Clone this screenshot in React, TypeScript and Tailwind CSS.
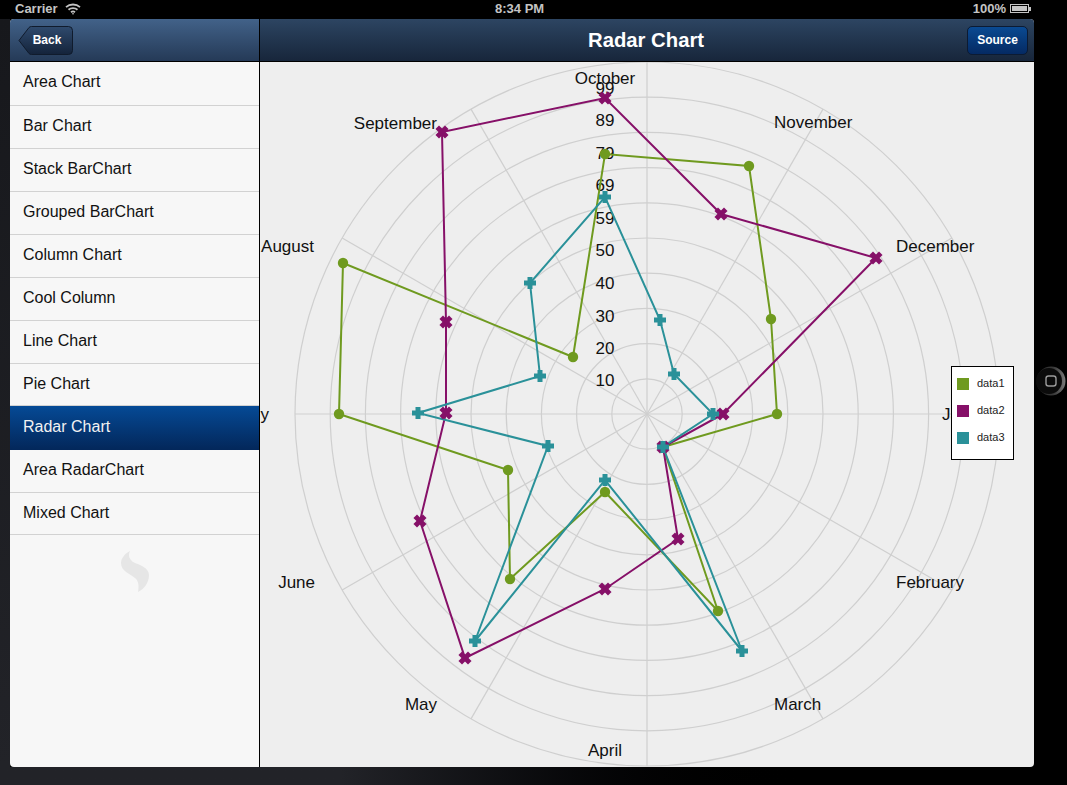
import { useMemo } from "react"

const menu = [
  "Area Chart",
  "Bar Chart",
  "Stack BarChart",
  "Grouped BarChart",
  "Column Chart",
  "Cool Column",
  "Line Chart",
  "Pie Chart",
  "Radar Chart",
  "Area RadarChart",
  "Mixed Chart",
]

// chart box starts at x 260, y 62 in the page
const cx = 387
const cy = 352
const ringGap = 35.2

const monthLabels: [string, number, number, "start" | "middle" | "end"][] = [
  ["January", 682, 358, "start"],
  ["February", 636, 526, "start"],
  ["March", 514, 648, "start"],
  ["April", 345, 694, "middle"],
  ["May", 177, 648, "end"],
  ["June", 55, 526, "end"],
  ["July", 9, 358, "end"],
  ["August", 54, 190, "end"],
  ["September", 177, 67, "end"],
  ["October", 345, 22, "middle"],
  ["November", 514, 66, "start"],
  ["December", 636, 190, "start"],
]

const ticks: [string, number][] = [
  ["10", 324],
  ["20", 292],
  ["30", 260],
  ["40", 227],
  ["50", 194],
  ["59", 162],
  ["69", 129],
  ["79", 97],
  ["89", 64],
  ["99", 32],
]

const data1 = [[517, 352], [403, 385], [458, 549], [345, 430], [250, 517], [248, 408], [79, 352], [83, 201], [313, 295], [345, 92], [489, 104], [511, 257]]
const data2 = [[463, 352], [403, 385], [418, 477], [345, 527], [205, 596], [160, 459], [186, 351], [186, 260], [182, 70], [345, 36], [461, 152], [616, 196]]
const data3 = [[453, 352], [403, 385], [482, 589], [345, 418], [215, 579], [288, 384], [158, 351], [280, 314], [270, 221], [345, 135], [400, 258], [414, 312]]

function toPoints(list: number[][]) {
  return list.map((p) => p.join(",")).join(" ")
}

function CrossMark({ x, y, color }: { x: number; y: number; color: string }) {
  return (
    <g stroke={color} strokeWidth="5" strokeLinecap="square">
      <line x1={x - 3} y1={y - 3} x2={x + 3} y2={y + 3} />
      <line x1={x + 3} y1={y - 3} x2={x - 3} y2={y + 3} />
    </g>
  )
}

function PlusMark({ x, y, color }: { x: number; y: number; color: string }) {
  return (
    <g stroke={color} strokeWidth="5">
      <line x1={x - 6} y1={y} x2={x + 6} y2={y} />
      <line x1={x} y1={y - 6} x2={x} y2={y + 6} />
    </g>
  )
}

function RadarChart() {
  const spokes = useMemo(
    () =>
      Array.from({ length: 12 }, (_, i) => {
        const a = (i * Math.PI) / 6
        return { x: cx + Math.cos(a) * ringGap * 10, y: cy + Math.sin(a) * ringGap * 10 }
      }),
    []
  )

  return (
    <svg width="774" height="705" viewBox="0 0 774 705" className="block">
      <g fill="none" stroke="#cfcfcf" strokeWidth="1.2">
        {Array.from({ length: 10 }, (_, i) => (
          <circle key={i} cx={cx} cy={cy} r={ringGap * (i + 1)} />
        ))}
        {spokes.map((s, i) => (
          <line key={i} x1={cx} y1={cy} x2={s.x} y2={s.y} />
        ))}
      </g>
      <g fontFamily="'Liberation Sans', Arial, sans-serif" fontSize="17" fill="#111">
        {monthLabels.map(([label, x, y, anchor]) => (
          <text key={label} x={x} y={y} textAnchor={anchor}>
            {label}
          </text>
        ))}
        {ticks.map(([label, y]) => (
          <text key={label} x={345} y={y} textAnchor="middle">
            {label}
          </text>
        ))}
      </g>
      <g fill="none" strokeWidth="2">
        <polygon points={toPoints(data1)} stroke="#6f9a1f" />
        <polygon points={toPoints(data2)} stroke="#861068" />
        <polygon points={toPoints(data3)} stroke="#2a9199" />
      </g>
      {data1.map(([x, y], i) => (
        <circle key={i} cx={x} cy={y} r="5.2" fill="#6f9a1f" />
      ))}
      {data2.map(([x, y], i) => (
        <CrossMark key={i} x={x} y={y} color="#861068" />
      ))}
      {data3.map(([x, y], i) => (
        <PlusMark key={i} x={x} y={y} color="#2a9199" />
      ))}
    </svg>
  )
}

function LegendRow({ color, label }: { color: string; label: string }) {
  return (
    <div className="flex items-center gap-2 h-[27px]">
      <span className={`w-3 h-3 ${color}`} />
      <span className="text-[11px] text-[#222]">{label}</span>
    </div>
  )
}

function HomeButton() {
  return (
    <svg width="30" height="30" viewBox="0 0 30 30">
      <defs>
        <linearGradient id="homeRing" x1="0" y1="0" x2="1" y2="0">
          <stop offset="0" stopColor="#262626" />
          <stop offset="0.6" stopColor="#3a3a3a" />
          <stop offset="1" stopColor="#7a7a7a" />
        </linearGradient>
      </defs>
      <circle cx="15" cy="15" r="14.5" fill="url(#homeRing)" />
      <circle cx="13" cy="15" r="13" fill="#0b0b0b" />
      <rect x="10" y="10" width="10" height="10" rx="2.5" fill="none" stroke="#9a9a9a" strokeWidth="1.4" />
    </svg>
  )
}

// row heights differ by a pixel here and there in the reference
const rowSizes: Record<string, string> = {
  "Area Chart": "h-[44px] pb-[4px]",
  "Pie Chart": "h-[42px] pb-[1px]",
  "Mixed Chart": "h-[42px] pb-[2px]",
}

export default function App() {
  return (
    <div className="w-[1067px] h-[785px] overflow-hidden flex flex-col bg-black font-['Liberation_Sans',Arial,sans-serif]">
      {/* status bar */}
      <div className="h-[19px] shrink-0 bg-black text-[#c4c4c4] text-[13px] font-bold flex items-center justify-between pl-[15px] pr-[36px] pb-[2px] relative">
        <div className="flex items-center gap-[7px]">
          <span>Carrier</span>
          <svg width="16" height="12" viewBox="0 0 16 12" fill="none" stroke="#c4c4c4" strokeWidth="1.8">
            <path d="M1 4.2C5 .6 11 .6 15 4.2" />
            <path d="M3.5 6.8C6 4.6 10 4.6 12.5 6.8" />
            <path d="M6 9.2C7.2 8.2 8.8 8.2 10 9.2" />
            <path d="M8 9.8l1 1-1 1-1-1z" fill="#c4c4c4" stroke="none" />
          </svg>
        </div>
        <span className="absolute left-[495px] top-0 leading-[17px]">8:34 PM</span>
        <div className="flex items-center gap-[4px]">
          <span>100%</span>
          <span className="flex items-center">
            <span className="w-[19px] h-[9px] border border-[#c4c4c4] p-px flex">
              <span className="flex-1 bg-[#c4c4c4]" />
            </span>
            <span className="w-[2px] h-[4px] bg-[#c4c4c4]" />
          </span>
        </div>
      </div>

      <div className="flex flex-1 min-h-0">
        <div className="w-[10px] shrink-0 bg-gradient-to-b from-[#17181c] to-[#222328]" />

        {/* app panel */}
        <div className="w-[1024px] shrink-0 h-[748px] bg-black">
          <div className="w-full h-full rounded-[4px] overflow-hidden flex">
            {/* sidebar */}
            <div className="w-[250px] shrink-0 flex flex-col bg-[#f7f7f7] border-r border-black">
              <div className="h-[43px] shrink-0 border-b border-black bg-gradient-to-b from-[#426289] to-[#253a57] flex items-center pl-[8px]">
                <div className="relative h-[29px] w-[55px] flex items-center justify-center pl-[3px] text-white text-[12px] font-bold">
                  <svg width="55" height="29" viewBox="0 0 55 29" className="absolute left-0 top-0">
                    <defs>
                      <linearGradient id="backFill" x1="0" y1="0" x2="0" y2="1">
                        <stop offset="0" stopColor="#2f4a6d" />
                        <stop offset="1" stopColor="#14233a" />
                      </linearGradient>
                    </defs>
                    <path
                      d="M1 14.5L11 1.5Q12 .5 13.5 .5H50.5Q54.5 .5 54.5 4.5V24.5Q54.5 28.5 50.5 28.5H13.5Q12 28.5 11 27.5Z"
                      fill="url(#backFill)"
                      stroke="#101b2c"
                    />
                  </svg>
                  <span className="relative">Back</span>
                </div>
              </div>
              {menu.map((item) => {
                if (item === "Radar Chart") {
                  return (
                    <div
                      key={item}
                      className="h-[44px] shrink-0 pl-[13px] pb-[3px] flex items-center text-[16px] text-[#f2f2f2] bg-gradient-to-b from-[#054a96] to-[#03275a]"
                    >
                      {item}
                    </div>
                  )
                }
                return (
                  <div
                    key={item}
                    className={`shrink-0 pl-[13px] flex items-center text-[16px] text-[#111] border-b border-[#d2d2d2] ${
                      rowSizes[item] ?? "h-[43px] pb-[2px]"
                    }`}
                  >
                    {item}
                  </div>
                )
              })}
              <div className="flex justify-center pt-[16px]">
                <svg width="30" height="42" viewBox="0 0 30 42">
                  <path
                    d="M10 0C4 3 1 8 1 12C1 20 10 23 15 27C19 30 19 36 18 41C24 38 29 32 29 24C29 17 20 14 13 11C9 8 8 4 10 0Z"
                    fill="#e6e6e6"
                  />
                </svg>
              </div>
            </div>

            {/* content */}
            <div className="flex-1 min-w-0 flex flex-col bg-[#eeeeee]">
              <div className="h-[43px] shrink-0 border-b border-black bg-gradient-to-b from-[#2d4562] to-[#17263b] flex items-center justify-between pl-[328px] pr-[6px]">
                <span className="text-white text-[20.3px] font-bold">Radar Chart</span>
                <div className="h-[29px] w-[61px] rounded-[5px] border border-[#0c1b33] bg-gradient-to-b from-[#0a4a92] to-[#052a63] text-white text-[12px] font-bold flex items-center justify-center">
                  Source
                </div>
              </div>
              <div className="relative flex-1 min-h-0 overflow-hidden">
                <RadarChart />
                <div className="absolute left-[691px] top-[304px] w-[63px] h-[94px] bg-white border border-black pl-[5px] py-[3px]">
                  <LegendRow color="bg-[#6f9a1f]" label="data1" />
                  <LegendRow color="bg-[#861068]" label="data2" />
                  <LegendRow color="bg-[#2a9199]" label="data3" />
                </div>
              </div>
            </div>
          </div>
        </div>

        {/* simulator edge with the home button */}
        <div className="flex-1 bg-black flex justify-center items-start pt-[347px]">
          <HomeButton />
        </div>
      </div>

      <div className="h-[18px] shrink-0 bg-gradient-to-r from-[#222328] from-[32%] to-black to-[77%]" />
    </div>
  )
}
